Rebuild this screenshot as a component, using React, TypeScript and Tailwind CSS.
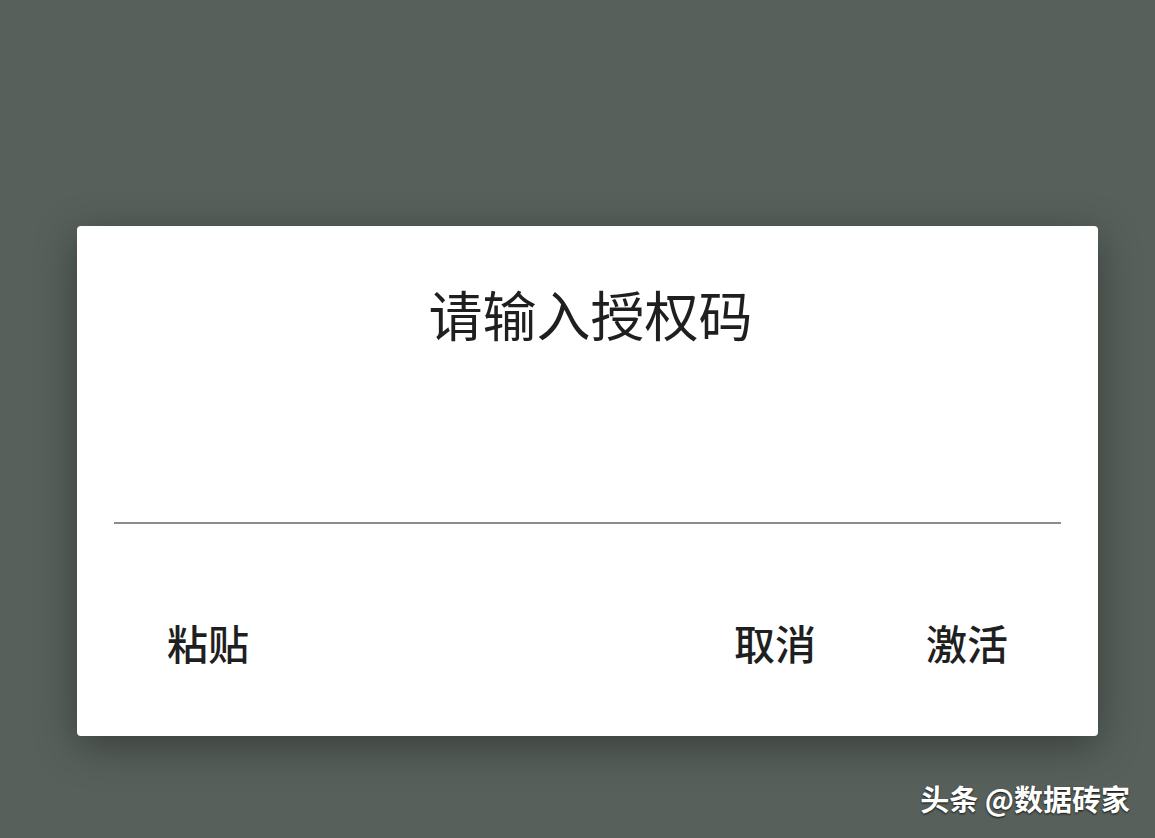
import React from "react";

const cjk = { fontFamily: '"Noto Sans CJK SC", "Noto Sans", sans-serif' };

export default function App() {
  return (
    <div
      className="relative h-[838px] w-[1155px] overflow-hidden bg-[#57605a] pl-[77px] pt-[226px]"
      style={cjk}
    >
      <div className="flex h-[510px] w-[1021px] flex-col rounded-[4px] bg-white shadow-[0_10px_40px_rgba(0,0,0,0.35)]">
        <h1 className="mt-[61px] pl-[6px] text-center text-[54px] font-normal leading-none text-[#1f1f1f]">
          请输入授权码
        </h1>

        <input
          className="mx-[37px] mt-[123px] h-[60px] border-b-2 border-[#8c8c8c] bg-transparent text-[36px] outline-none"
          aria-label="授权码"
        />

        <div className="mt-[98px] flex items-center px-[90px] text-[41px] font-medium leading-none text-[#1f1f1f]">
          <button className="leading-none">粘贴</button>
          <div className="flex-1" />
          <button className="leading-none">取消</button>
          <button className="ml-[110px] leading-none">激活</button>
        </div>
      </div>

      <div className="absolute bottom-[25px] right-[25px] text-[29px] font-bold leading-none text-white [text-shadow:0_1px_2px_rgba(0,0,0,0.8)]">
        头条 @数据砖家
      </div>
    </div>
  );
}
